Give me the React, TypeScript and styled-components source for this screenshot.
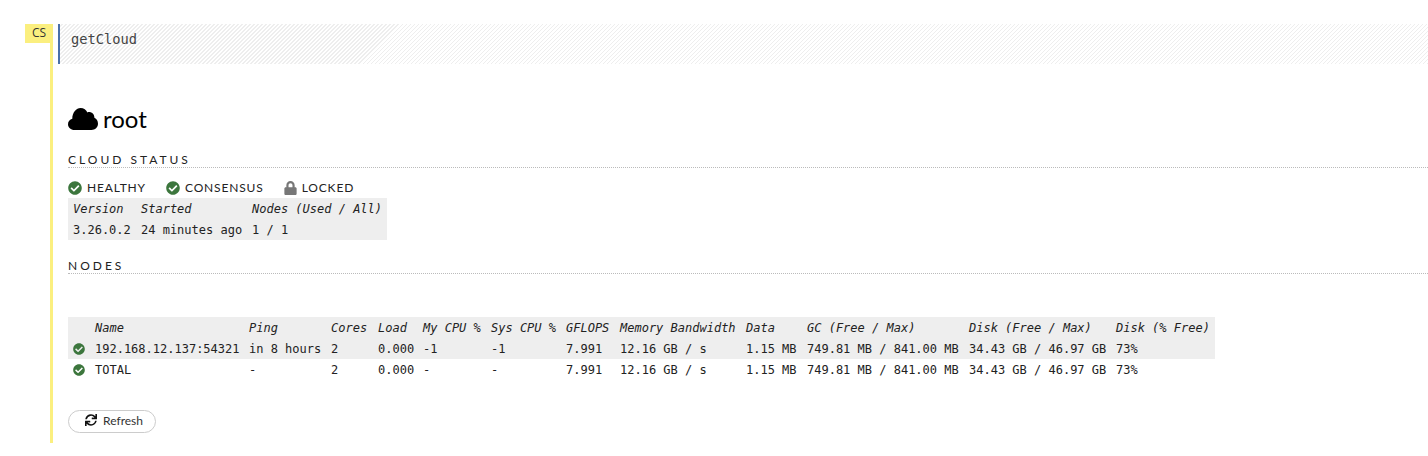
import styled, { createGlobalStyle } from 'styled-components';
import { FaCheckCircle, FaLock, FaSync } from 'react-icons/fa';

const mono = `'DejaVu Sans Mono', monospace`;

const statusCols = [68, 111, 140];
const statusHead = ['Version', 'Started', 'Nodes (Used / All)'];
const statusRow = ['3.26.0.2', '24 minutes ago', '1 / 1'];

const nodeCols = [22, 154, 82, 47, 45, 68, 75, 54, 126, 61, 162, 147, 104];
const nodeHead = [
  'Name',
  'Ping',
  'Cores',
  'Load',
  'My CPU %',
  'Sys CPU %',
  'GFLOPS',
  'Memory Bandwidth',
  'Data',
  'GC (Free / Max)',
  'Disk (Free / Max)',
  'Disk (% Free)',
];

const nodeRows = [
  [
    '192.168.12.137:54321',
    'in 8 hours',
    '2',
    '0.000',
    '-1',
    '-1',
    '7.991',
    '12.16 GB / s',
    '1.15 MB',
    '749.81 MB / 841.00 MB',
    '34.43 GB / 46.97 GB',
    '73%',
  ],
  [
    'TOTAL',
    '-',
    '2',
    '0.000',
    '-',
    '-',
    '7.991',
    '12.16 GB / s',
    '1.15 MB',
    '749.81 MB / 841.00 MB',
    '34.43 GB / 46.97 GB',
    '73%',
  ],
];

const App = () => {
  return (
    <>
      <GlobalStyle />
      <Page>
        <Gutter>
          <Badge>CS</Badge>
        </Gutter>
        <Main>
          <Input>getCloud</Input>
          <Output>
            <Title>
              <svg width='30' height='22' viewBox='0 0 30 22' aria-hidden='true'>
                <path d='M6.500 22C2.800 22 0 19.400 0 16.200C0 13.500 1.800 11.300 4.300 10.700C4.200 4.500 8.500 0 12.500 0C15.800 0 18.300 2 19.400 4.400C22.500 3.300 26.500 5.500 26.400 9.800C28.600 10.800 30 13 30 15.800C30 19.400 27 22 23.500 22Z' />
              </svg>
              <span>root</span>
            </Title>

            <SectionHeading>Cloud Status</SectionHeading>
            <Flags>
              <Flag>
                <OkIcon />
                Healthy
              </Flag>
              <Flag>
                <OkIcon />
                Consensus
              </Flag>
              <Flag>
                <LockIcon />
                Locked
              </Flag>
            </Flags>
            <DataTable $width={319}>
              <colgroup>
                {statusCols.map((w, i) => (
                  <col key={i} width={w} />
                ))}
              </colgroup>
              <thead>
                <tr>
                  {statusHead.map(h => (
                    <HeadCell key={h}>{h}</HeadCell>
                  ))}
                </tr>
              </thead>
              <tbody>
                <tr>
                  {statusRow.map(c => (
                    <Cell key={c}>{c}</Cell>
                  ))}
                </tr>
              </tbody>
            </DataTable>

            <NodesHeading>Nodes</NodesHeading>
            <NodesTable $width={1147}>
              <colgroup>
                {nodeCols.map((w, i) => (
                  <col key={i} width={w} />
                ))}
              </colgroup>
              <thead>
                <tr>
                  <HeadCell />
                  {nodeHead.map(h => (
                    <HeadCell key={h}>{h}</HeadCell>
                  ))}
                </tr>
              </thead>
              <tbody>
                {nodeRows.map(row => (
                  <tr key={row[0]}>
                    <IconCell>
                      <OkIcon />
                    </IconCell>
                    {row.map((c, i) => (
                      <Cell key={i}>{c}</Cell>
                    ))}
                  </tr>
                ))}
              </tbody>
            </NodesTable>

            <RefreshButton>
              <FaSync />
              Refresh
            </RefreshButton>
          </Output>
        </Main>
      </Page>
    </>
  );
};

const GlobalStyle = createGlobalStyle`
  html, body {
    margin: 0;
    padding: 0;
    background: #fff;
    overflow: hidden;
  }
  body {
    font-family: Lato, sans-serif;
    color: #222;
  }
`;

const Page = styled.div`
  display: flex;
  width: 1428px;
  padding-top: 24px;
  box-sizing: border-box;
`;

const Gutter = styled.div`
  flex: 0 0 28px;
  margin-left: 25px;
  height: 419px;
  display: flex;
  flex-direction: column;
  align-items: stretch;
  background: linear-gradient(#fbef7f, #fbef7f) no-repeat right top / 3px 100%;
`;

const Badge = styled.div`
  height: 19px;
  line-height: 18px;
  background: #fbef7f;
  text-align: center;
  font-size: 12px;
  font-family: 'Open Sans', sans-serif;
  color: #333;
`;

const Main = styled.div`
  flex: 1;
  min-width: 0;
  margin-left: 5px;
`;

const Input = styled.div`
  height: 40px;
  box-sizing: border-box;
  padding: 8px 0 0 11px;
  border-left: 2px solid #4a6fa9;
  font-family: ${mono};
  font-size: 13.7px;
  line-height: 15px;
  color: #444;
  background: repeating-linear-gradient(
    -45deg,
    #eee 0,
    #eee 1px,
    #fff 1px,
    #fff 2.83px
  );
`;

const Output = styled.div`
  padding: 39px 0 0 10px;
`;

const Title = styled.h1`
  display: flex;
  align-items: center;
  gap: 5px;
  margin: 0;
  height: 31px;
  font-family: Lato, sans-serif;
  font-size: 24px;
  font-weight: 400;
  color: #000;

  svg {
    display: block;
  }
`;

const SectionHeading = styled.h2`
  margin: 18px 0 0;
  height: 15px;
  font-size: 12px;
  font-weight: 400;
  line-height: 15px;
  letter-spacing: 3px;
  text-transform: uppercase;
  color: #222;
  border-bottom: 1px dotted #bbb;
`;

const NodesHeading = styled(SectionHeading)`
  margin-top: 18px;
`;

const Flags = styled.div`
  display: flex;
  gap: 20px;
  margin-top: 11px;
  height: 17px;
`;

const Flag = styled.div`
  display: flex;
  align-items: center;
  gap: 5px;
  font-size: 12px;
  letter-spacing: 0.85px;
  text-transform: uppercase;
  color: #222;
`;

const OkIcon = styled(FaCheckCircle)`
  width: 14px;
  height: 14px;
  color: #3c763d;
  display: block;
`;

const LockIcon = styled(FaLock)`
  width: 13px;
  height: 14px;
  color: #777;
  display: block;
`;

const DataTable = styled.table<{ $width: number }>`
  border-collapse: collapse;
  table-layout: fixed;
  width: ${({ $width }) => $width}px;
  margin-top: 2px;
  font-family: ${mono};
  font-size: 12px;
  color: #222;

  thead tr {
    background: #eee;
  }
  tbody tr:first-child {
    background: #eee;
  }
`;

const NodesTable = styled(DataTable)`
  margin-top: 43px;
`;

const HeadCell = styled.th`
  height: 21px;
  padding: 0 5px;
  box-sizing: border-box;
  text-align: left;
  font-weight: 400;
  font-style: italic;
  white-space: pre;
`;

const Cell = styled.td`
  height: 21px;
  padding: 0 5px;
  box-sizing: border-box;
  white-space: pre;
`;

const IconCell = styled(Cell)`
  padding: 0 5px;

  svg {
    width: 12px;
    height: 12px;
  }
`;

const RefreshButton = styled.button`
  display: flex;
  align-items: center;
  justify-content: center;
  gap: 6px;
  margin-top: 30px;
  width: 88px;
  height: 23px;
  padding: 0 0 3px 4px;
  border: 1px solid #ccc;
  border-radius: 12px;
  background: #fff;
  font-family: Lato, sans-serif;
  font-size: 12px;
  color: #333;

  svg {
    width: 12px;
    height: 12px;
    color: #111;
  }
`;

export default App;
